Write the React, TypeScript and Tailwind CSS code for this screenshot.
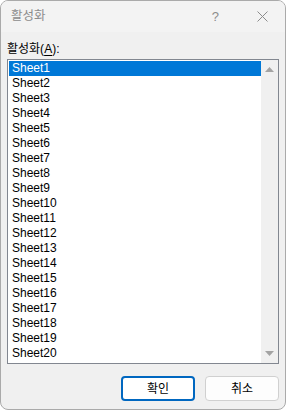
const sheets = Array.from({ length: 20 }, (_, i) => `Sheet${i + 1}`);

const font = { fontFamily: '"Segoe UI", "Liberation Sans", "Noto Sans CJK KR", sans-serif' };

export default function App() {
  return (
    <div className="h-[410px] w-[286px] bg-white" style={font}>
      <div className="flex h-full w-full flex-col overflow-hidden rounded-lg border border-[#aaaaaa] bg-[#f0f0f0]">
        <div className="flex h-[31px] shrink-0 items-center bg-[#f3f3f3] pl-[10px] text-[12.5px] text-[#8c8c8c]">
          <span className="flex-1">활성화</span>
          <span className="mr-[38px] text-[13px]">?</span>
          <svg width="11" height="11" viewBox="0 0 11 11" className="mr-[17px]">
            <path d="M0.5 0.5L10.5 10.5M10.5 0.5L0.5 10.5" stroke="#8c8c8c" strokeWidth="1" />
          </svg>
        </div>

        <div className="flex flex-1 flex-col px-[6px]">
          <div className="mt-[9px] h-[17px] text-[12px] leading-[17px] text-black">
            활성화(<span className="underline underline-offset-2">A</span>):
          </div>
          <div className="mt-[1px] flex h-[305px] border border-[#828790] bg-white">
            <div className="flex-1 pl-[1px] pt-[1px]">
              {sheets.map((s, i) => (
                <div
                  key={s}
                  className={`h-[15px] pl-[3px] text-[12px] leading-[15px] ${
                    i === 0 ? "bg-[#0078d7] text-white" : "text-black"
                  }`}
                >
                  {s}
                </div>
              ))}
            </div>
            <div className="flex w-[17px] flex-col items-center justify-between bg-[#f0f0f0] py-[7px]">
              <svg width="9" height="5" viewBox="0 0 9 5">
                <path d="M0 5L4.5 0L9 5Z" fill="#a3a3a3" />
              </svg>
              <svg width="9" height="5" viewBox="0 0 9 5">
                <path d="M0 0L9 0L4.5 5Z" fill="#a3a3a3" />
              </svg>
            </div>
          </div>

          <div className="mt-[12px] flex justify-end gap-[10px]">
            <button className="h-[25px] w-[74px] rounded-[4px] border-2 border-[#0067c0] bg-white text-[12px] text-black">
              확인
            </button>
            <button className="h-[25px] w-[74px] rounded-[4px] border border-[#d0d0d0] bg-[#fdfdfd] text-[12px] text-black">
              취소
            </button>
          </div>
        </div>
      </div>
    </div>
  );
}
